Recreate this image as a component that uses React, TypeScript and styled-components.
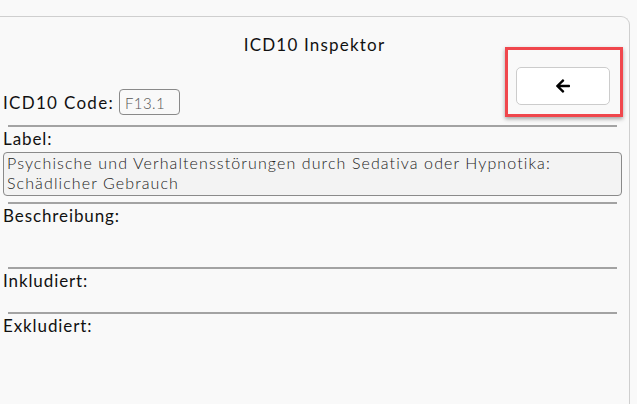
import { createGlobalStyle } from "styled-components";
import styled from "styled-components";
import { FaArrowLeft } from "react-icons/fa";

const GlobalStyle = createGlobalStyle`
  html, body {
    margin: 0;
    padding: 0;
    background: #f9f9f9;
    font-family: "Lato", "Liberation Sans", sans-serif;
    color: #111;
    overflow: hidden;
  }
`;

type Section = { label: string; height: number };

const sections: Section[] = [
  { label: "Beschreibung:", height: 63 },
  { label: "Inkludiert:", height: 43 },
];

export default function App() {
  return (
    <>
      <GlobalStyle />
      <Card>
        <Title>ICD10 Inspektor</Title>
        <HeaderRow>
          <CodeLine>
            ICD10 Code: <CodeBox>F13.1</CodeBox>
          </CodeLine>
          <BackWrap>
            <BackButton aria-label="Zurück">
              <FaArrowLeft size={16} />
            </BackButton>
          </BackWrap>
        </HeaderRow>
        <Rule $gap={0} />
        <FieldLabel>Label:</FieldLabel>
        <LabelBox>
          Psychische und Verhaltensstörungen durch Sedativa oder Hypnotika:
          <br />
          Schädlicher Gebrauch
        </LabelBox>
        <Rule $gap={6} />
        {sections.map((s) => (
          <div key={s.label}>
            <FieldBlock $height={s.height}>
              <FieldLabel>{s.label}</FieldLabel>
            </FieldBlock>
            <Rule $gap={0} />
          </div>
        ))}
        <FieldLabel>Exkludiert:</FieldLabel>
      </Card>
    </>
  );
}

const Card = styled.div`
  margin-top: 16px;
  margin-left: -10px;
  width: 640px;
  height: 388px;
  box-sizing: border-box;
  border: 1px solid #cfcfcf;
  border-bottom: none;
  border-top-right-radius: 9px;
  padding: 0 7px 0 12px;
  display: flex;
  flex-direction: column;
`;

const Title = styled.div`
  text-align: center;
  font-size: 17px;
  padding-top: 18px;
  padding-left: 4px;
  line-height: 20px;
  letter-spacing: 1.2px;
`;

const HeaderRow = styled.div`
  display: flex;
  justify-content: space-between;
  align-items: flex-start;
  margin-top: 12px;
  height: 58px;
`;

const CodeLine = styled.div`
  margin-top: 22px;
  font-size: 17px;
  display: flex;
  align-items: center;
  gap: 5px;
  letter-spacing: 1.3px;
`;

const CodeBox = styled.span`
  display: inline-block;
  width: 61px;
  height: 26px;
  box-sizing: border-box;
  border: 1px solid #8a8a8a;
  border-radius: 4px;
  padding: 4px 5px 0;
  font-size: 15px;
  font-weight: 300;
  color: #555;
  line-height: 18px;
  letter-spacing: 0.4px;
`;

const BackWrap = styled.div`
  position: relative;
  margin-right: 12px;

  &::after {
    content: "";
    position: absolute;
    left: -11px;
    right: -13px;
    top: -20px;
    bottom: -12px;
    border: 3px solid #f0474d;
    box-shadow: 0 2px 4px rgba(0, 0, 0, 0.35);
    pointer-events: none;
  }
`;

const BackButton = styled.button`
  width: 94px;
  height: 38px;
  background: #fff;
  border: 1px solid #cccccc;
  border-radius: 5px;
  display: flex;
  align-items: center;
  justify-content: center;
  color: #000;
  padding: 0;
  cursor: pointer;
`;

const Rule = styled.div<{ $gap: number }>`
  height: 2px;
  background: #a3a3a3;
  margin: ${(p) => p.$gap}px 5px 0;
`;

const FieldLabel = styled.div`
  font-size: 17px;
  line-height: 20px;
  padding-top: 2px;
  letter-spacing: 0.9px;
`;

const FieldBlock = styled.div<{ $height: number }>`
  height: ${(p) => p.$height}px;
`;

const LabelBox = styled.div`
  margin-top: 3px;
  border: 1px solid #8a8a8a;
  border-radius: 4px;
  background: #f3f3f3;
  padding: 0 3px 2px;
  font-size: 16px;
  font-weight: 300;
  line-height: 20px;
  color: #222;
  letter-spacing: 1.1px;
  white-space: nowrap;
`;
